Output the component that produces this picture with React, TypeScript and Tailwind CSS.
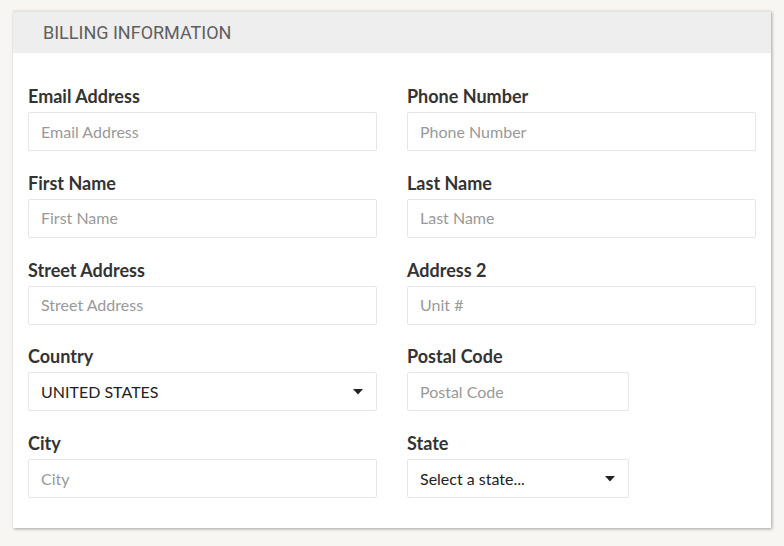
import React from "react";

const Caret = () => (
  <svg width="10" height="6" viewBox="0 0 10 6" className="absolute right-[13px] top-1/2 -translate-y-1/2">
    <path d="M0 0 L10 0 L5 5.5 Z" fill="#222" />
  </svg>
);

const Field = ({ label, placeholder, narrow }: { label: string; placeholder: string; narrow?: boolean }) => (
  <div className="flex flex-col">
    <label className="h-[24px] text-[18px] leading-[24px] font-bold text-[#333] mb-[4px]">{label}</label>
    <div
      className={`h-[39px] border border-[#e6e6e6] rounded-[2px] bg-white flex items-center px-[12px] text-[16px] leading-[24px] text-[#999] ${
        narrow ? "w-[222px]" : "w-full"
      }`}
    >
      {placeholder}
    </div>
  </div>
);

const SelectField = ({ label, value, narrow }: { label: string; value: string; narrow?: boolean }) => (
  <div className="flex flex-col">
    <label className="h-[24px] text-[18px] leading-[24px] font-bold text-[#333] mb-[4px]">{label}</label>
    <div
      className={`relative h-[39px] border border-[#e6e6e6] rounded-[2px] bg-white flex items-center px-[12px] text-[16px] leading-[24px] text-[#222] ${
        narrow ? "w-[222px]" : "w-full"
      }`}
    >
      {value}
      <Caret />
    </div>
  </div>
);

export default function App() {
  return (
    <div className="w-[784px] h-[546px] bg-[#f7f6f2] pt-[11px] pl-[13px]" style={{ fontFamily: "Lato, 'Noto Sans', sans-serif" }}>
      <div className="w-[758px] bg-white shadow-[1px_1px_3px_rgba(0,0,0,0.35)]">
        <div className="h-[42px] bg-[#eeeeee] border-t border-[#e2e2e2] flex items-center pl-[30px]">
          <span className="text-[18px] text-[#5f5f5f] font-normal" style={{ fontFamily: "Roboto, 'Noto Sans', sans-serif" }}>
            BILLING INFORMATION
          </span>
        </div>
        <div className="px-[15px] pt-[31px] pb-[30px] grid grid-cols-2 gap-x-[30px] gap-y-[19.75px]">
          <Field label="Email Address" placeholder="Email Address" />
          <Field label="Phone Number" placeholder="Phone Number" />
          <Field label="First Name" placeholder="First Name" />
          <Field label="Last Name" placeholder="Last Name" />
          <Field label="Street Address" placeholder="Street Address" />
          <Field label="Address 2" placeholder="Unit #" />
          <SelectField label="Country" value="UNITED STATES" />
          <Field label="Postal Code" placeholder="Postal Code" narrow />
          <Field label="City" placeholder="City" />
          <SelectField label="State" value="Select a state..." narrow />
        </div>
      </div>
    </div>
  );
}
